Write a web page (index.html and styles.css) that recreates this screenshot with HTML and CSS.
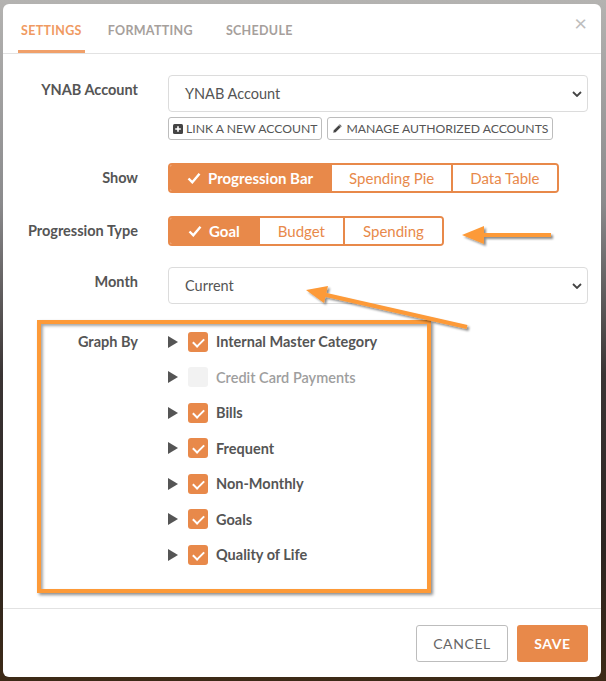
FILE: index.html
```html
<!DOCTYPE html>
<html lang="en">
<head>
    <meta charset="UTF-8">
    <title>Widget Settings</title>
    <link rel="stylesheet" href="styles.css">
</head>
<body>
    <div class="modal">
        <div class="tabs">
            <a class="tab active">Settings</a>
            <a class="tab">Formatting</a>
            <a class="tab">Schedule</a>
            <span class="close">&times;</span>
        </div>

        <div class="modal-body">
            <div class="form-row">
                <label>YNAB Account</label>
                <div>
                    <div class="select">YNAB Account
                        <svg class="chevron" viewBox="0 0 10 6"><path d="M1 1l4 4 4-4" fill="none" stroke="#444" stroke-width="1.8"/></svg>
                    </div>
                    <div class="small-buttons">
                        <button class="small-btn">
                            <svg viewBox="0 0 10 10" width="10" height="10"><rect width="10" height="10" rx="1.5" fill="#444"/><path d="M5 2.2v5.6M2.2 5h5.6" stroke="#fff" stroke-width="1.6"/></svg>
                            Link a new account
                        </button>
                        <button class="small-btn">
                            <svg viewBox="0 0 12 12" width="11" height="11"><path d="M1 11l.6-3L8.4 1.2l2.4 2.4L4 10.4z M7.4 2.2l2.4 2.4" fill="#444" stroke="#fff" stroke-width=".6"/></svg>
                            Manage authorized accounts
                        </button>
                    </div>
                </div>
            </div>

            <div class="form-row">
                <label>Show</label>
                <div class="btn-group">
                    <button class="active"><svg class="check" viewBox="0 0 14 12"><path d="M1.5 6.5l3.8 3.8L12.5 1.8" fill="none" stroke="#fff" stroke-width="2.4"/></svg>Progression Bar</button>
                    <button>Spending Pie</button>
                    <button>Data Table</button>
                </div>
            </div>

            <div class="form-row">
                <label>Progression Type</label>
                <div class="btn-group wide">
                    <button class="active"><svg class="check" viewBox="0 0 14 12"><path d="M1.5 6.5l3.8 3.8L12.5 1.8" fill="none" stroke="#fff" stroke-width="2.4"/></svg>Goal</button>
                    <button>Budget</button>
                    <button>Spending</button>
                </div>
            </div>

            <div class="form-row month-row">
                <label>Month</label>
                <div class="select">Current
                    <svg class="chevron" viewBox="0 0 10 6"><path d="M1 1l4 4 4-4" fill="none" stroke="#444" stroke-width="1.8"/></svg>
                </div>
            </div>

            <div class="form-row graph-row">
                <label>Graph By</label>
                <ul class="tree">
                    <li><span class="caret"></span><span class="box on"></span>Internal Master Category</li>
                    <li class="disabled"><span class="caret"></span><span class="box"></span>Credit Card Payments</li>
                    <li><span class="caret"></span><span class="box on"></span>Bills</li>
                    <li><span class="caret"></span><span class="box on"></span>Frequent</li>
                    <li><span class="caret"></span><span class="box on"></span>Non-Monthly</li>
                    <li><span class="caret"></span><span class="box on"></span>Goals</li>
                    <li><span class="caret"></span><span class="box on"></span>Quality of Life</li>
                </ul>
            </div>
        </div>

        <div class="modal-footer">
            <button class="btn-cancel">Cancel</button>
            <button class="btn-save">Save</button>
        </div>

        <!-- screenshot annotations -->
        <div class="highlight-box"></div>
        <svg class="arrows" width="606" height="681" viewBox="0 0 606 681">
            <defs>
                <filter id="shadow" x="-20%" y="-50%" width="140%" height="200%">
                    <feDropShadow dx="2" dy="2" stdDeviation="1.2" flood-color="#000" flood-opacity="0.45"/>
                </filter>
            </defs>
            <g filter="url(#shadow)" fill="#fd9a38" stroke="#fd9a38">
                <path d="M551 235H478" stroke-width="4" fill="none"/>
                <path d="M462 235l22-9v18z" stroke="none"/>
                <path d="M467 327L322 294" stroke-width="4" fill="none"/>
                <path d="M306 290l22-4-4 17z" stroke="none"/>
            </g>
        </svg>
    </div>
</body>
</html>
```

FILE: styles.css
```css
* {
    box-sizing: border-box;
}

body {
    margin: 0;
    width: 606px;
    height: 681px;
    padding: 4px 5px 4px 3px;
    font-family: Lato, "Open Sans", sans-serif;
    color: #555;
    background: linear-gradient(180deg, #b4b3b1 0%, #8a8a8c 30%, #3a3434 55%, #2c2522 80%, #3d2a16 100%);
    overflow: hidden;
}

.modal {
    position: relative;
    background: #fff;
    border-radius: 6px;
    height: 673px;
    display: flex;
    flex-direction: column;
}

.tabs {
    position: relative;
    display: flex;
    height: 50px;
    padding-left: 15px;
    border-bottom: 1px solid #e2e2e2;
}

.tab {
    display: flex;
    align-items: center;
    padding: 7px 3px 0;
    margin-right: 20px;
    font-size: 12.5px;
    font-weight: bold;
    letter-spacing: 0.3px;
    text-transform: uppercase;
    color: #a6a09c;
    border-bottom: 3px solid transparent;
}

.tab:nth-child(2) {
    margin-right: 27px;
}

.tab.active {
    color: #f09a62;
    border-bottom-color: #f0a06a;
}

.close {
    position: absolute;
    right: 14px;
    top: 5px;
    font-size: 22px;
    color: #bdbdbd;
}

.modal-body {
    flex: 1;
    padding: 21px 13px 0 15px;
}

.form-row {
    display: grid;
    grid-template-columns: 120px 1fr;
    column-gap: 30px;
    margin-bottom: 23px;
}

.form-row label {
    text-align: right;
    font-weight: bold;
    font-size: 14.5px;
    color: #555;
    padding-top: 6px;
}

.select {
    position: relative;
    height: 37px;
    border: 1px solid #dcdcdc;
    border-radius: 4px;
    padding-left: 16px;
    display: flex;
    align-items: center;
    font-size: 14.5px;
    color: #555;
}

.chevron {
    position: absolute;
    right: 5px;
    top: 15px;
    width: 10px;
    height: 6px;
}

.small-buttons {
    display: flex;
    gap: 5px;
    margin-top: 5px;
}

.small-btn {
    display: flex;
    align-items: center;
    gap: 3px;
    height: 23px;
    padding: 0 4px;
    background: #fff;
    border: 1px solid #bdbdbd;
    border-radius: 3px;
    font-family: inherit;
    font-size: 12.2px;
    text-transform: uppercase;
    color: #555;
}

.btn-group {
    display: flex;
    justify-self: start;
    height: 30px;
    border: 2px solid #e8894a;
    border-radius: 4px;
    overflow: hidden;
}

.btn-group button {
    display: flex;
    align-items: center;
    background: #fff;
    border: none;
    border-left: 2px solid #e8894a;
    padding: 0 17px;
    font-family: inherit;
    font-size: 15px;
    color: #e8894a;
}

.btn-group.wide button {
    padding: 0 18px;
}

.btn-group button:first-child {
    border-left: none;
}

.btn-group button.active {
    background: #e8894a;
    color: #fff;
    font-weight: bold;
}

.check {
    width: 14px;
    height: 12px;
    margin-right: 7px;
}

.month-row {
    margin-top: -2px;
}

.graph-row {
    margin-top: 28px;
}

.graph-row label {
    padding-top: 1px;
}

.tree {
    list-style: none;
    margin: 0;
    padding: 0;
}

.tree li {
    display: flex;
    align-items: center;
    height: 35.5px;
    font-size: 14.5px;
    font-weight: bold;
    color: #555;
}

.tree li:first-child {
    margin-top: -8px;
}

.caret {
    width: 0;
    height: 0;
    border-top: 6px solid transparent;
    border-bottom: 6px solid transparent;
    border-left: 10px solid #555;
    margin-right: 10px;
}

.box {
    width: 20px;
    height: 20px;
    border-radius: 3px;
    background: #f2f2f2;
    margin-right: 8px;
    position: relative;
}

.box.on {
    background: #e8894a;
}

.box.on::after {
    content: "";
    position: absolute;
    left: 7px;
    top: 4px;
    width: 5px;
    height: 9px;
    border: solid #fff;
    border-width: 0 2px 2px 0;
    transform: rotate(45deg);
}

.tree li.disabled {
    color: #9e9e9e;
    font-weight: 600;
}

.modal-footer {
    display: flex;
    justify-content: flex-end;
    gap: 9px;
    height: 69px;
    padding: 16px 13px 0 0;
    border-top: 1px solid #e2e2e2;
}

.modal-footer button {
    height: 37px;
    border-radius: 3px;
    font-family: inherit;
    font-size: 14px;
    letter-spacing: 0.6px;
    text-transform: uppercase;
}

.btn-cancel {
    width: 92px;
    background: #fff;
    border: 1px solid #bdbdbd;
    color: #666;
}

.btn-save {
    width: 71px;
    background: #e8894a;
    border: none;
    color: #fff;
    font-weight: bold;
}

.highlight-box {
    position: absolute;
    left: 34px;
    top: 316px;
    width: 394px;
    height: 273px;
    border: 4px solid #fd9a38;
    box-shadow: 2px 2px 3px rgba(0, 0, 0, 0.45), inset 2px 2px 3px rgba(0, 0, 0, 0.35);
}

.arrows {
    position: absolute;
    left: -3px;
    top: -4px;
    pointer-events: none;
}
```
